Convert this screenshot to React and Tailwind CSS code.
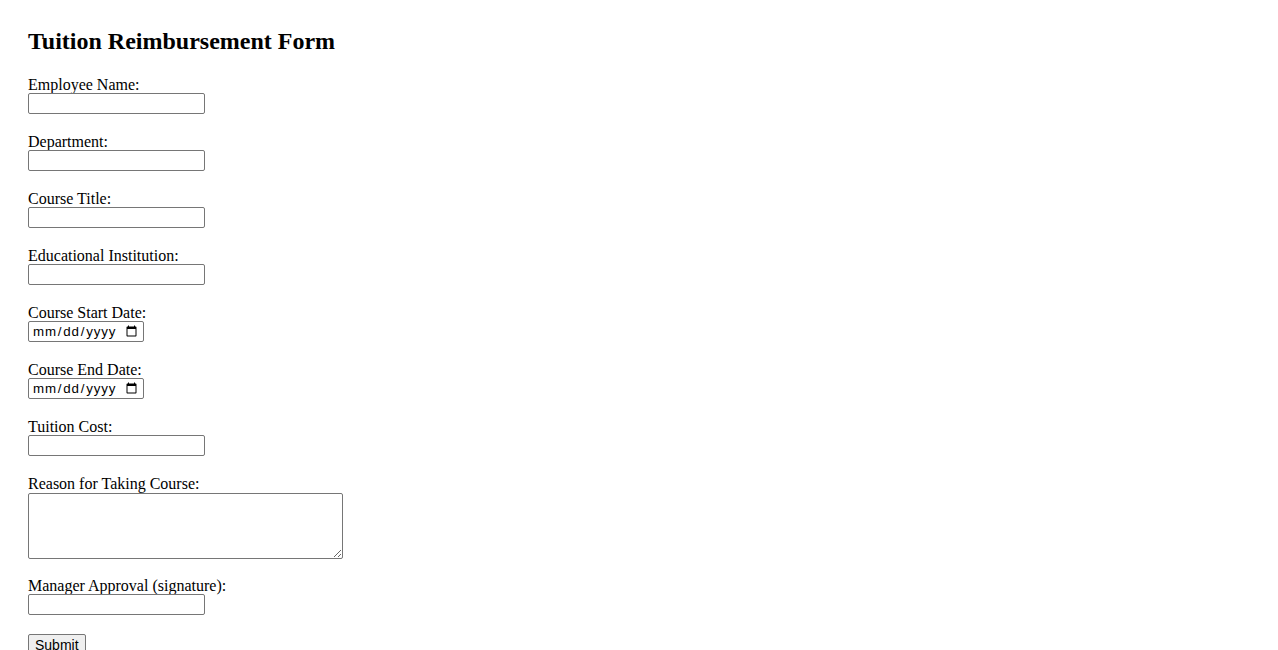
import React from "react";

const fields = [
  { label: "Employee Name:", type: "text" },
  { label: "Department:", type: "text" },
  { label: "Course Title:", type: "text" },
  { label: "Educational Institution:", type: "text" },
  { label: "Course Start Date:", type: "date" },
  { label: "Course End Date:", type: "date" },
  { label: "Tuition Cost:", type: "number" },
  { label: "Reason for Taking Course:", type: "textarea" },
  { label: "Manager Approval (signature):", type: "text" },
];

export default function App() {
  return (
    <div className="min-h-screen bg-white text-black pl-[28px] pt-[27px] font-['Liberation_Serif',serif]">
      <h2 className="text-[24px] font-bold leading-[28px] mb-[21px]">Tuition Reimbursement Form</h2>
      <form className="flex flex-col" onSubmit={e => e.preventDefault()}>
        {fields.map(f => (
          <div key={f.label} className="flex flex-col items-start mb-[19px]">
            <label className="text-[16px] leading-[17px]">{f.label}</label>
            {f.type === "textarea" ? (
              <textarea className="mt-[1px] -mb-[1px] w-[315px] h-[66px] border border-[#767676] rounded-[2px] px-[2px] py-[2px] text-[13.33px] font-['Liberation_Mono',monospace] bg-white resize" />
            ) : f.type === "date" ? (
              <input
                type="date"
                className="w-[116px] h-[21px] border border-[#767676] rounded-[2px] pl-[3px] pr-[3px] text-[13.33px] tracking-[0.8px] font-['Liberation_Sans',sans-serif] bg-white"
              />
            ) : (
              <input
                type="text"
                className="w-[177px] h-[21px] border border-[#767676] rounded-[2px] px-[2px] text-[13.33px] font-['Liberation_Sans',sans-serif] bg-white"
              />
            )}
          </div>
        ))}
        <div className="flex">
          <button
            type="submit"
            className="h-[22px] px-[6px] border border-[#767676] rounded-[2px] bg-[#efefef] text-[14px] leading-[18px] font-['Liberation_Sans',sans-serif]"
          >
            Submit
          </button>
        </div>
      </form>
    </div>
  );
}
